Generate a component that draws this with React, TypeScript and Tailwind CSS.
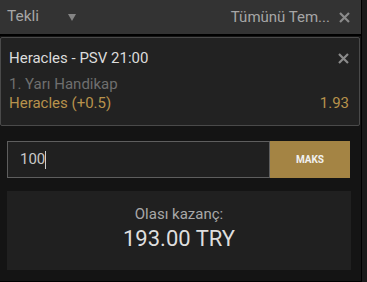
export default function App() {
  return (
    <div className="flex h-[282px] w-[367px] bg-[#1a1a1a] font-['Roboto',sans-serif]">
      <div className="flex w-[361px] flex-col border-b border-black bg-[#141414]">
        <div className="flex h-[34px] shrink-0 items-center justify-between bg-[#333333] pl-[7px] pr-[11px]">
          <div className="flex items-center">
            <span className="text-[15.5px] text-[#a6a6a6]">Tekli</span>
            <svg width="8" height="7" viewBox="0 0 8 7" className="ml-[29px] text-[#858585]">
              <path d="M0 0H8L4 7Z" fill="currentColor" />
            </svg>
          </div>
          <div className="flex items-center gap-[9px]">
            <span className="text-[15px] text-[#a6a6a6]">Tümünü Tem...</span>
            <XIcon />
          </div>
        </div>
        <div className="h-[2px] shrink-0 bg-black" />
        <div className="mt-[1px] mr-[1px] flex h-[89px] flex-col rounded-[2px] border border-[#4a4a4a] bg-[#222222] pl-[8px] pr-[10px] pt-[11px]">
          <div className="flex items-center justify-between">
            <span className="text-[15px] leading-[18px] text-[#dcdcdc]">Heracles - PSV 21:00</span>
            <XIcon />
          </div>
          <div className="mt-[8px] text-[15px] leading-[18px] text-[#6f6f6f]">1. Yarı Handikap</div>
          <div className="mt-[1px] flex justify-between text-[15px] leading-[18px] text-[#b8924c]">
            <span>Heracles (+0.5)</span>
            <span>1.93</span>
          </div>
        </div>
        <div className="ml-[7px] mr-[11px] mt-[15px] flex h-[37px]">
          <div className="flex flex-1 items-center border border-[#5e5e5e] bg-[#202020] pl-[12px]">
            <span className="text-[15px] text-[#c8c8c8]">100</span>
            <span className="h-[18px] w-px bg-[#cccccc]" />
          </div>
          <button className="w-[80px] bg-[#a48444] text-[10px] font-bold text-[#f0f0f0]">MAKS</button>
        </div>
        <div className="ml-[7px] mr-[10px] mt-[13px] flex h-[79px] flex-col items-center bg-[#202020] pt-[14px]">
          <span className="text-[15px] leading-[18px] text-[#a8a8a8]">Olası kazanç:</span>
          <span className="mt-[3px] text-[22px] leading-[26px] text-[#dedede]">193.00 TRY</span>
        </div>
      </div>
      <div className="w-px bg-black" />
    </div>
  );
}

function XIcon() {
  return (
    <svg width="11" height="11" viewBox="0 0 11 11" className="text-[#8a8a8a]">
      <path d="M1 1L10 10M10 1L1 10" stroke="currentColor" strokeWidth="2.2" />
    </svg>
  );
}
